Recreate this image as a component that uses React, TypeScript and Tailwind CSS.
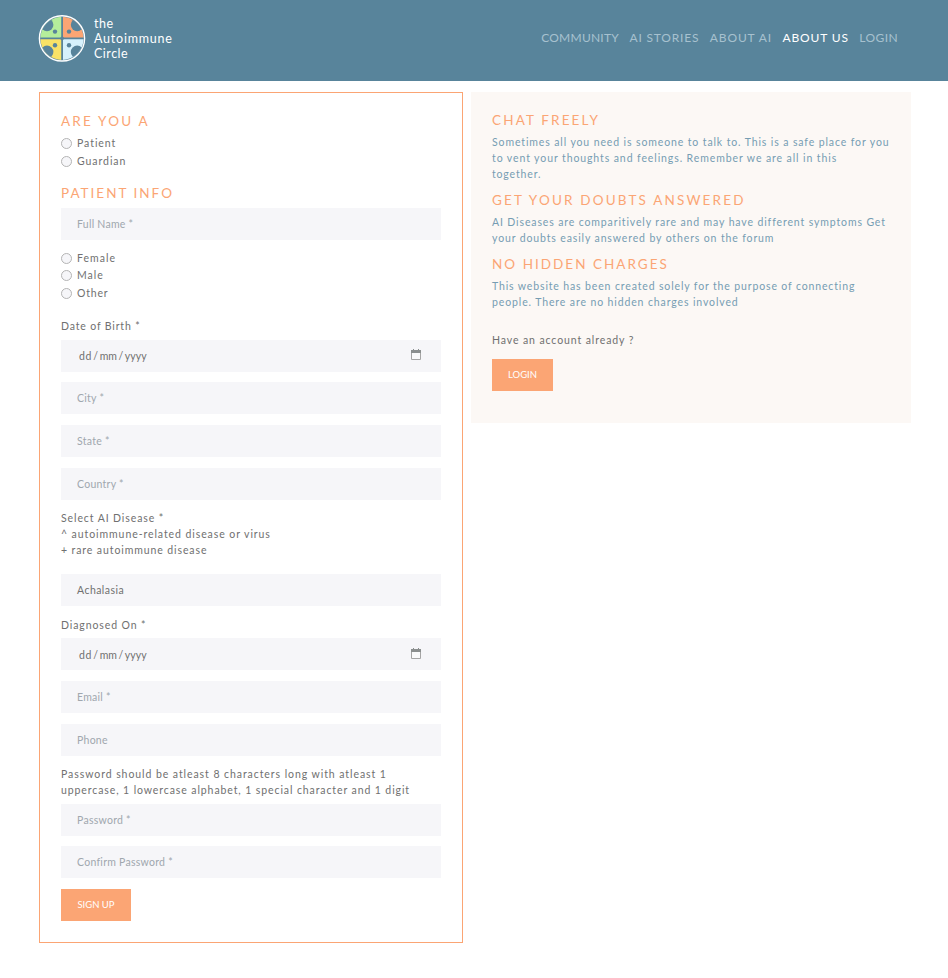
import type { ReactNode } from "react";

function Logo() {
  return (
    <svg width="48" height="49" viewBox="0 0 48 49" className="shrink-0">
      <defs>
        <clipPath id="disc">
          <circle cx="24" cy="24.4" r="21.6" />
        </clipPath>
      </defs>
      <g clipPath="url(#disc)">
        <path d="M0 0h23.2v23.6H0z" fill="#b5ed9b" />
        <path d="M25 0h23v23.6H25z" fill="#fba574" />
        <path d="M0 25.3h23.2V49H0z" fill="#f8e267" />
        <path d="M25 25.3h23V49H25z" fill="#d6f1fc" />
        <g fill="#58849b">
          <circle cx="9" cy="10.8" r="6.4" />
          <circle cx="39.2" cy="10.8" r="6.4" />
          <circle cx="9" cy="38" r="6.4" />
          <circle cx="39.2" cy="38" r="6.4" />
          <circle cx="17" cy="17.6" r="2.2" />
          <circle cx="31" cy="17.6" r="2.2" />
          <circle cx="17" cy="31.2" r="2.2" />
          <circle cx="31" cy="31.2" r="2.2" />
          <circle cx="24.1" cy="24.4" r="1.8" />
        </g>
      </g>
      <circle cx="24" cy="24.4" r="22.6" fill="none" stroke="#fff" strokeWidth="1.4" />
    </svg>
  );
}

function Heading({ children, className = "" }: { children: ReactNode; className?: string }) {
  return <h2 className={"whitespace-nowrap text-[13.5px] leading-4 text-[#fba574] " + className}>{children}</h2>;
}

function Radio({ label, name, className = "" }: { label: string; name: string; className?: string }) {
  return (
    <label className={"flex h-4 items-center gap-[5px] leading-4 " + className}>
      <input type="radio" name={name} className="size-[11px] appearance-none rounded-full border border-[#b4b4b4] bg-[#f6f6f9]" />
      <span>{label}</span>
    </label>
  );
}

function Field({ placeholder, className = "" }: { placeholder: string; className?: string }) {
  return (
    <input
      placeholder={placeholder}
      className={"block h-8 w-[380px] bg-[#f6f6f9] px-4 pb-px tracking-[0.26px] placeholder:text-[#a0a7ae] " + className}
    />
  );
}

function DateField({ className = "" }: { className?: string }) {
  return (
    <div className={"flex h-8 w-[380px] items-start justify-between bg-[#f6f6f9] pl-[18px] pr-5 " + className}>
      <span className="flex gap-[1.6px]">
        <span className="tracking-[0.5px]">dd</span>
        <span>/</span>
        <span className="-tracking-[0.1px]">mm</span>
        <span>/</span>
        <span className="tracking-[0.1px]">yyyy</span>
      </span>
      <svg width="10" height="11" viewBox="0 0 10 11" className="mt-px">
        <path d="M0.5 1.5h9v9h-9z" fill="#fafafb" stroke="#a5a5a5" />
        <path d="M0 1h10v3H0zM2 0h1v1H2zM7 0h1v1H7z" fill="#8b8f8f" />
      </svg>
    </div>
  );
}

export default function App() {
  return (
    <div className="min-h-[978px] bg-white font-['Lato',sans-serif] text-[10.5px] leading-4 text-[#707070]">
      <header className="flex h-[81px] justify-between bg-[#58849b] pl-[38px] pr-[50px]">
        <div className="flex gap-2 pt-[14px]">
          <Logo />
          <div className="pt-[2px] text-[12.5px] leading-[15px] text-white">
            <div className="tracking-[0.5px]">the</div>
            <div className="tracking-[0.77px]">Autoimmune</div>
            <div className="tracking-[0.5px]">Circle</div>
          </div>
        </div>
        <nav className="flex gap-[10.5px] whitespace-nowrap pt-[30px] text-[12px] leading-4 text-[#a7c1cf]">
          <a className="tracking-[0.25px]">COMMUNITY</a>
          <a className="tracking-[0.8px]">AI STORIES</a>
          <a className="tracking-[0.88px]">ABOUT AI</a>
          <a className="tracking-[0.86px] text-white">ABOUT US</a>
          <a className="tracking-[0.4px]">LOGIN</a>
        </nav>
      </header>
      <main className="flex items-start gap-2 pl-[39px] pt-[11px]">
        <form className="h-[851px] w-[424px] border border-[#fba574] px-[21px] pt-5">
          <Heading className="tracking-[2.2px]">ARE YOU A</Heading>
          <Radio name="who" label="Patient" className="mt-[6px] tracking-[0.95px]" />
          <Radio name="who" label="Guardian" className="mt-[2px] tracking-[0.95px]" />
          <Heading className="mt-4 tracking-[2px]">PATIENT INFO</Heading>
          <Field placeholder="Full Name *" className="mt-[7px]" />
          <Radio name="sex" label="Female" className="mt-[10px] tracking-[1.05px]" />
          <Radio name="sex" label="Male" className="mt-[1px] tracking-[1px]" />
          <Radio name="sex" label="Other" className="mt-[2px] tracking-[0.8px]" />
          <p className="mt-[17px] tracking-[0.85px]">Date of Birth *</p>
          <DateField className="mt-[6px] pt-2" />
          <Field placeholder="City *" className="mt-[10px]" />
          <Field placeholder="State *" className="mt-[11px]" />
          <Field placeholder="Country *" className="mt-[11px]" />
          <div className="mt-[10px] whitespace-nowrap">
            <p className="tracking-[0.9px]">Select AI Disease *</p>
            <p className="tracking-[0.92px]">^ autoimmune-related disease or virus</p>
            <p className="tracking-[0.9px]">+ rare autoimmune disease</p>
          </div>
          <div className="mt-4 h-8 w-[380px] bg-[#f6f6f9] px-4 leading-[33px] tracking-[0.45px]">Achalasia</div>
          <p className="mt-[11px] tracking-[0.9px]">Diagnosed On *</p>
          <DateField className="mt-[5px] pt-[9px]" />
          <Field placeholder="Email *" className="mt-[11px]" />
          <Field placeholder="Phone" className="mt-[11px]" />
          <div className="mt-[10px] whitespace-nowrap">
            <p className="tracking-[0.93px]">Password should be atleast 8 characters long with atleast 1</p>
            <p className="tracking-[0.9px]">uppercase, 1 lowercase alphabet, 1 special character and 1 digit</p>
          </div>
          <Field placeholder="Password *" className="mt-[6px]" />
          <Field placeholder="Confirm Password *" className="mt-[10px]" />
          <button type="button" className="mt-[11px] block h-8 w-[70px] bg-[#fba574] text-[9.5px] text-white">SIGN UP</button>
        </form>
        <aside className="h-[331px] w-[440px] whitespace-nowrap bg-[#fcf8f5] px-[21px] pt-5 text-[#769db3]">
          <Heading className="tracking-[2.15px]">CHAT FREELY</Heading>
          <div className="mt-[6px]">
            <p className="tracking-[0.88px]">Sometimes all you need is someone to talk to. This is a safe place for you</p>
            <p className="tracking-[0.9px]">to vent your thoughts and feelings. Remember we are all in this</p>
            <p className="tracking-[0.85px]">together.</p>
          </div>
          <Heading className="mt-[10px] tracking-[2.17px]">GET YOUR DOUBTS ANSWERED</Heading>
          <div className="mt-[6px]">
            <p className="tracking-[0.87px]">AI Diseases are comparitively rare and may have different symptoms Get</p>
            <p className="tracking-[0.87px]">your doubts easily answered by others on the forum</p>
          </div>
          <Heading className="mt-[10px] tracking-[2.02px]">NO HIDDEN CHARGES</Heading>
          <div className="mt-[6px]">
            <p className="tracking-[0.86px]">This website has been created solely for the purpose of connecting</p>
            <p className="tracking-[0.88px]">people. There are no hidden charges involved</p>
          </div>
          <p className="mt-[22px] tracking-[0.9px] text-[#707070]">Have an account already ?</p>
          <button type="button" className="mt-[11px] block h-8 w-[61px] bg-[#fba574] text-[9.5px] text-white">LOGIN</button>
        </aside>
      </main>
    </div>
  );
}
